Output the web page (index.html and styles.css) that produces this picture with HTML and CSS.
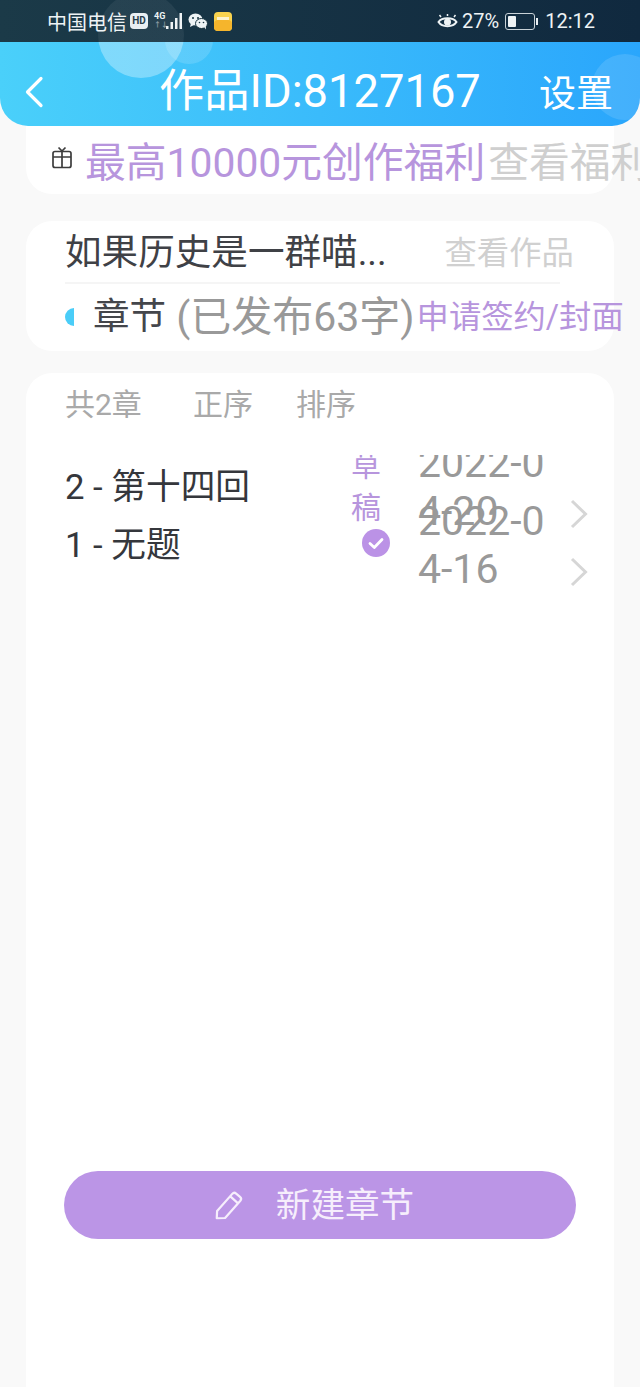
FILE: index.html
```html
<!DOCTYPE html>
<html lang="zh-CN">
<head>
<meta charset="utf-8">
<title>作品</title>
<link rel="stylesheet" href="styles.css">
</head>
<body>
<div class="page">
  <div class="top">
    <div class="status">
      <div class="status-left">
        <span class="carrier">中国电信</span>
        <span class="hd">HD</span>
        <span class="net"><span class="net-4g">4G</span><span class="net-arrows">↑↓</span></span>
        <svg class="signal" width="17" height="18" viewBox="0 0 17 18"><path d="M0 14h2.500v3H0zM4.500 10H7v7H4.500zM9 6h2.500v11H9zM13.500 1H16v16h-2.500z" fill="#eef3f5"/></svg>
        <svg class="wechat" width="20" height="17" viewBox="0 0 20 17"><ellipse cx="7.500" cy="6.500" rx="7" ry="6" fill="#eef3f5"/><path d="M3 10l-1 4 4-2z" fill="#eef3f5"/><ellipse cx="13.500" cy="10.500" rx="6" ry="5" fill="#eef3f5" stroke="#17333f"/><path d="M16 14l2 2.500-.2-4z" fill="#eef3f5"/><circle cx="5" cy="5" r="1" fill="#17333f"/><circle cx="10" cy="5" r="1" fill="#17333f"/><circle cx="11.500" cy="9.500" r=".8" fill="#17333f"/><circle cx="15.500" cy="9.500" r=".8" fill="#17333f"/></svg>
        <svg class="app" width="18" height="19" viewBox="0 0 18 19"><rect width="18" height="19" rx="4" fill="#f9d34f"/><rect y="8" width="18" height="11" rx="4" fill="#f5b52c"/><path d="M3 5h12v3H3z" fill="#fdf3cf"/></svg>
      </div>
      <div class="status-right">
        <svg width="21" height="17" viewBox="0 0 21 17"><path d="M1.500 9C5 4 16 4 19.500 9 16 14.500 5 14.500 1.500 9z" fill="none" stroke="#eef3f5" stroke-width="2"/><circle cx="10.500" cy="9" r="3.500" fill="#eef3f5"/><path d="M4 4L2.500 2M10.500 3V1M17 4l1.500-2" stroke="#eef3f5" stroke-width="1.500"/></svg>
        <span class="pct">27%</span>
        <span class="battery"><span class="battery-fill"></span></span><span class="battery-tip"></span>
        <span class="clock">12:12</span>
      </div>
    </div>
    <header class="head">
      <svg class="back" width="20" height="32" viewBox="0 0 20 32"><path d="M17 2.500L3.500 16 17 29.500" fill="none" stroke="#fff" stroke-width="3.200" stroke-linecap="round" stroke-linejoin="round"/></svg>
      <h1 class="title">作品ID:8127167</h1>
      <span class="settings">设置</span>
    </header>
    <span class="bubble bubble-a"></span>
    <span class="bubble bubble-b"></span>
    <div class="bubble-clip"><span class="bubble bubble-c"></span></div>
  </div>

  <section class="card promo">
    <svg class="gift" width="22" height="23" viewBox="0 0 22 23"><rect x="2" y="5.500" width="18" height="16" rx="2" fill="none" stroke="#3d3d3d" stroke-width="1.700"/><path d="M2 11h18M11 5.500v16M7.500 1.500L11 5l3.500-3.500" fill="none" stroke="#3d3d3d" stroke-width="1.700"/></svg>
    <span class="promo-text">最高10000元创作福利</span><span class="promo-link">查看福利</span>
  </section>

  <section class="card work">
    <div class="work-row">
      <span class="work-name">如果历史是一群喵...</span>
      <span class="work-view">查看作品</span>
    </div>
    <div class="chapter-row">
      <span class="dot"></span>
      <span class="chapter-label">章节</span>
      <span class="chapter-count">(已发布63字)</span>
      <span class="chapter-apply">申请签约/封面</span>
    </div>
  </section>

  <section class="card chapters">
    <div class="tools">
      <span class="tool-total">共2章</span>
      <span class="tool-order">正序</span>
      <span>排序</span>
    </div>
    <div class="list">
      <div class="row">
        <span class="row-title">2 - 第十四回</span>
        <span class="row-state">草稿</span>
        <span class="row-date">2022-04-20</span>
        <svg class="chev" width="18" height="30" viewBox="0 0 18 30"><path d="M2 2l13.500 13L2 28" fill="none" stroke="#d6d6d6" stroke-width="3"/></svg>
      </div>
      <div class="row">
        <span class="row-title">1 - 无题</span>
        <span class="row-state">
          <svg class="check" width="28" height="28" viewBox="0 0 28 28"><circle cx="14" cy="14" r="14" fill="#bb92e6"/><path d="M8 14.500l4.300 4L20 10.500" fill="none" stroke="#fff" stroke-width="2.800" stroke-linecap="round" stroke-linejoin="round"/></svg>
        </span>
        <span class="row-date">2022-04-16</span>
        <svg class="chev" width="18" height="30" viewBox="0 0 18 30"><path d="M2 2l13.500 13L2 28" fill="none" stroke="#d6d6d6" stroke-width="3"/></svg>
      </div>
    </div>
    <button class="new-btn" type="button">
      <svg width="31" height="31" viewBox="0 0 28 28"><path d="M2.500 25.500l.3-6.500L16.500 3.500a2.500 2.500 0 0 1 3.500-.3l3.500 3a2.500 2.500 0 0 1 .3 3.500L10 25.300zM15 6l6.500 5.800" fill="none" stroke="#f6eefc" stroke-width="2" stroke-linejoin="round"/></svg>
      <span class="new-label">新建章节</span>
    </button>
  </section>
</div>
</body>
</html>
```

FILE: styles.css
```css
* { box-sizing: border-box; }
html, body { margin: 0; padding: 0; }
body {
  font-family: Roboto, "Noto Sans CJK SC", sans-serif;
  background: #f9f9f9;
}
.page {
  width: 640px;
  height: 1387px;
  overflow: hidden;
  display: flex;
  flex-direction: column;
  align-items: center;
}
.top {
  position: relative;
  width: 640px;
  height: 126px;
  flex: none;
  z-index: 2;
}
.status {
  height: 42px;
  background: linear-gradient(90deg, #1b3a48, #10293f);
  display: flex;
  justify-content: space-between;
  align-items: center;
  padding: 0 45px 0 47px;
  color: #eef3f5;
}
.status-left, .status-right { display: flex; align-items: center; }
.carrier { font-size: 20px; }
.hd {
  margin-left: 3px;
  width: 18px;
  height: 16px;
  border-radius: 4px;
  background: #e8eef2;
  color: #17333f;
  font-size: 10px;
  font-weight: 700;
  line-height: 16px;
  text-align: center;
}
.net {
  margin-left: 6px;
  width: 11px;
  display: flex;
  flex-direction: column;
  font-size: 9px;
  font-weight: 700;
  line-height: 9px;
}
.net-4g { white-space: nowrap; }
.net-arrows { white-space: nowrap; font-size: 7px; opacity: .5; }
.signal { margin-left: 1px; }
.wechat { margin-left: 5px; }
.app { margin-left: 6px; }
.pct { margin-left: 4px; font-size: 20px; }
.battery {
  margin-left: 6px;
  width: 30px;
  height: 17px;
  border: 1px solid #c8d2d8;
  border-radius: 3px;
  padding: 2px;
  display: flex;
}
.battery-fill { width: 8px; background: #eef3f5; border-radius: 1px; }
.battery-tip { width: 2px; height: 7px; margin-left: 1px; background: #e8eef2; }
.clock { margin-left: 7px; font-size: 20px; }
.head {
  position: relative;
  height: 84px;
  border-radius: 0 0 28px 28px;
  background: linear-gradient(90deg, #4ad0fa, #2aa6fc);
  color: #fff;
  display: flex;
  align-items: center;
  padding: 16px 27px 0 24px;
}
.back { flex: none; }
.title {
  margin: 0 0 1px 115px;
  font-size: 45.300px;
  font-weight: 400;
  line-height: 1;
  white-space: nowrap;
  width: 321px;
  text-align: center;
}
.settings { margin-left: auto; margin-top: 4px; font-size: 37px; line-height: 1; }
.bubble {
  position: absolute;
  display: block;
  border-radius: 50%;
  pointer-events: none;
}
.bubble-a {
  left: 98px;
  top: -8px;
  width: 86px;
  height: 86px;
  background: linear-gradient(180deg, rgba(255,255,255,.06) 50px, rgba(255,255,255,.32) 50px);
}
.bubble-b {
  left: 165px;
  top: 16px;
  width: 48px;
  height: 48px;
  background: linear-gradient(180deg, rgba(255,255,255,0) 26px, rgba(255,255,255,.14) 26px);
}
.bubble-clip {
  position: absolute;
  left: 0;
  right: 0;
  top: 42px;
  height: 84px;
  overflow: hidden;
  border-radius: 0 0 28px 28px;
}
.bubble-c { left: 592px; top: 12px; width: 66px; height: 66px; background: rgba(255,255,255,.12); }

.card { width: 588px; flex: none; background: #fff; border-radius: 26px; }

.promo {
  margin-top: -30px;
  height: 98px;
  padding: 30px 0 0 25px;
  display: flex;
  align-items: center;
  white-space: nowrap;
  font-size: 40.800px;
  line-height: 1;
}
.gift { flex: none; margin-right: 12px; margin-top: -6px; }
.promo-text { flex: none; color: #b795dd; margin-top: 6px; }
.promo-link { flex: none; margin-left: 3px; margin-top: 6px; color: #cfcfcf; }

.work { margin-top: 27px; height: 130px; padding: 0 0 0 39px; white-space: nowrap; }
.work-row {
  width: 495px;
  height: 63px;
  border-bottom: 2px solid #f5f5f5;
  display: flex;
  align-items: center;
  padding-top: 4px;
}
.work-name { flex: none; font-size: 36.600px; line-height: 1; color: #3f4146; }
.work-view { flex: none; margin-left: 58px; font-size: 32.300px; line-height: 1; color: #d0d0d0; }
.chapter-row { height: 66px; display: flex; align-items: center; }
.dot {
  flex: none;
  width: 9px;
  height: 18px;
  background: #4acdf8;
  border-radius: 9px 0 0 9px;
}
.chapter-label { flex: none; margin-left: 19px; font-size: 36.600px; color: #44464b; line-height: 1; }
.chapter-count { flex: none; margin-left: 10px; font-size: 41px; color: #999; line-height: 1; }
.chapter-apply { flex: none; margin-left: 2px; font-size: 32.300px; color: #b795dd; line-height: 1; }

.chapters {
  margin-top: 22px;
  flex: 1;
  border-radius: 26px 26px 0 0;
  padding: 0 0 0 39px;
  display: flex;
  flex-direction: column;
}
.tools {
  height: 58px;
  display: flex;
  align-items: center;
  font-size: 30px;
  color: #a9a9a9;
  flex: none;
}
.tool-total { width: 128px; }
.tool-order { width: 103px; }
.list {
  margin-top: 24px;
  height: 140px;
  flex: none;
  overflow: hidden;
  margin-right: -39px;
  padding-top: 3px;
}
.row { height: 58px; display: flex; align-items: center; }
.row-title { width: 286px; flex: none; font-size: 34.700px; color: #35373c; white-space: nowrap; line-height: 1; }
.row-state {
  width: 30px;
  flex: none;
  font-size: 30px;
  line-height: 42px;
  color: #b795dd;
  display: flex;
  justify-content: center;
}
.row-date {
  width: 132px;
  margin-left: 37px;
  flex: none;
  font-size: 41px;
  line-height: 48px;
  color: #999;
  word-break: break-all;
}
.chev { flex: none; margin-left: 20px; margin-top: 54px; }
.check { display: block; margin-left: 20px; flex: none; margin-top: -4px; }

.new-btn {
  margin: 576px 0 0 -1px;
  width: 512px;
  height: 68px;
  border: 0;
  border-radius: 34px;
  background: #bb95e6;
  color: #f6eefc;
  font-family: inherit;
  font-size: 34.600px;
  padding: 0 12px 0 0;
  display: flex;
  align-items: center;
  justify-content: center;
  gap: 31px;
  flex: none;
}
.new-label { line-height: 1; }
```
